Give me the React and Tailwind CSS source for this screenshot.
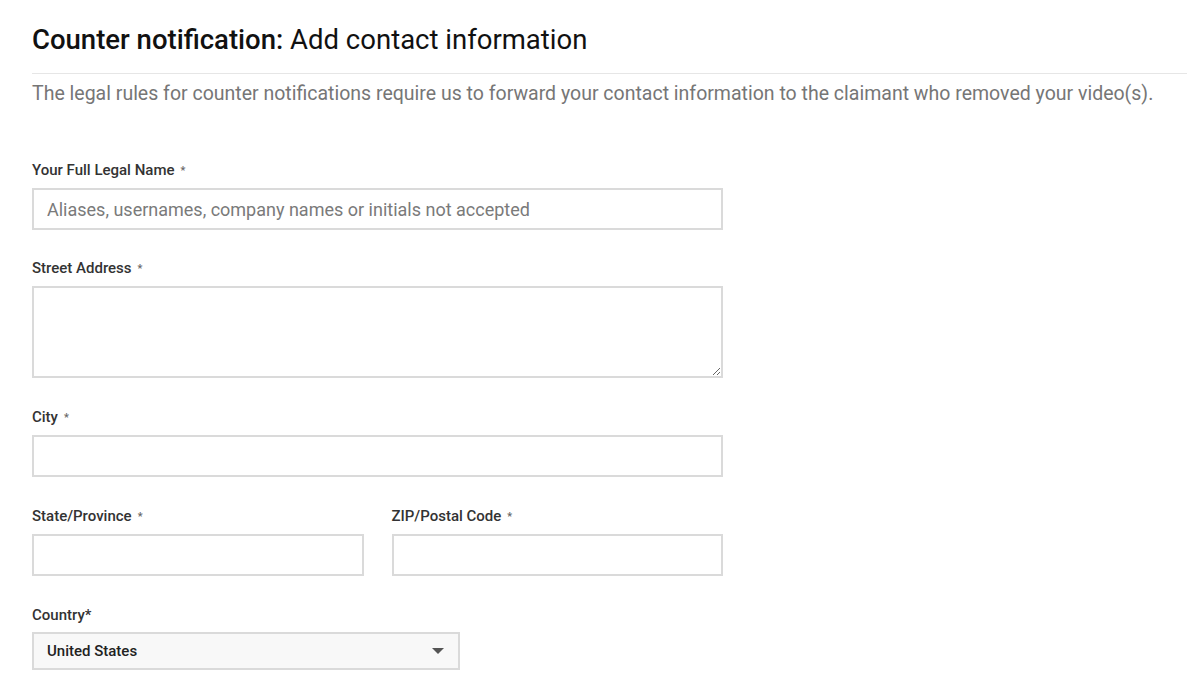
export default function App() {
  const Label = ({ children, star = true }) => (
    <label className="block text-[15px] leading-[20px] font-medium text-[#333] mb-[7px]">
      {children}
      {star && <span className="ml-[6px] text-[11px] text-[#666] align-middle">*</span>}
    </label>
  )

  const inputCls =
    'block w-full h-[42px] border-2 border-[#dadada] bg-white px-[13px] text-[18px] text-[#333] outline-none placeholder:text-[#7a7a7a]'

  return (
    <div className="min-h-[694px] bg-white pl-[32px] pr-[13px] pt-[22px] font-['Roboto','Liberation_Sans',sans-serif]">
      <h1 className="text-[27.5px] leading-[36px] text-[#111]">
        <span className="font-medium">Counter notification:</span> Add contact information
      </h1>
      <div className="mt-[15px] border-t border-[#e6e6e6]" />
      <p className="mt-[7px] text-[19.5px] leading-[26px] text-[#767676]">
        The legal rules for counter notifications require us to forward your contact information to the claimant who removed your video(s).
      </p>

      <form className="mt-[53px] w-[691px]">
        <div className="mb-[28px]">
          <Label>Your Full Legal Name</Label>
          <input className={inputCls} placeholder="Aliases, usernames, company names or initials not accepted" />
        </div>

        <div className="mb-[29px]">
          <Label>Street Address</Label>
          <textarea className="block w-full h-[92px] border-2 border-[#dadada] bg-white px-[13px] py-[8px] text-[18px] outline-none" />
        </div>

        <div className="mb-[29px]">
          <Label>City</Label>
          <input className={inputCls} />
        </div>

        <div className="mb-[29px] grid grid-cols-2 gap-[28px]">
          <div>
            <Label>State/Province</Label>
            <input className={inputCls} />
          </div>
          <div>
            <Label>ZIP/Postal Code</Label>
            <input className={inputCls} />
          </div>
        </div>

        <div>
          <label className="block text-[15px] leading-[20px] font-medium text-[#333] mb-[7px]">Country*</label>
          <div className="flex h-[38px] w-[428px] items-center justify-between border-2 border-[#dadada] bg-[#f8f8f8] pl-[13px] pr-[14px]">
            <span className="text-[15px] font-medium text-[#222]">United States</span>
            <svg width="12" height="7" viewBox="0 0 12 7" className="text-[#555]">
              <path d="M0 0h12L6 6z" fill="currentColor" />
            </svg>
          </div>
        </div>
      </form>
    </div>
  )
}
